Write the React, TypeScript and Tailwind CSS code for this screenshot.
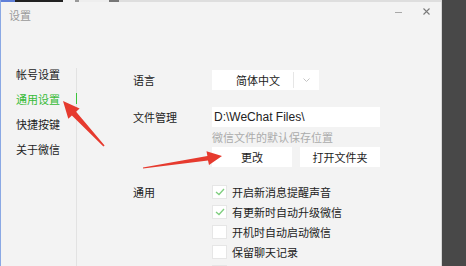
import React from "react";

const cjk = { fontFamily: '"Noto Sans CJK SC", "Noto Sans", sans-serif' };

function Check() {
  return (
    <svg width="10" height="8" viewBox="0 0 10 8" className="block">
      <path d="M1 4 L4 6.5 L9 1" fill="none" stroke="#7fce7f" strokeWidth="1.3" />
    </svg>
  );
}

function CheckRow({ label, checked }: { label: string; checked?: boolean }) {
  return (
    <div className="h-[20px] shrink-0 flex items-center">
      <div className="w-[15px] h-[14px] bg-white border border-[#e6e6e6] flex items-center justify-center">
        {checked ? <Check /> : null}
      </div>
      <span className="ml-[5px] text-[11px] leading-none text-[#222]">{label}</span>
    </div>
  );
}

export default function App() {
  return (
    <div className="relative w-[466px] h-[266px] overflow-hidden bg-[#484848] flex" style={cjk}>
      <div className="w-[442px] h-full flex flex-col bg-[#f3f3f3] border-l border-[#8aa8e4] border-r border-r-[#d6d6d6] overflow-hidden">
        {/* top strip */}
        <div className="h-[2px] shrink-0 flex bg-[#dedede]">
          <div className="w-[14px] bg-[#5f7fd8]" />
          <div className="w-[48px] bg-[#222]" />
          <div className="w-[12px] bg-[#f2f2f2]" />
          <div className="w-[4px] bg-[#999]" />
          <div className="w-[30px] bg-[#eee]" />
          <div className="w-[10px] bg-[#777]" />
        </div>
        {/* title bar */}
        <div className="h-[26px] shrink-0 flex items-center pl-[8px] pr-[11px]">
          <span className="text-[11px] text-[#9a9a9a] leading-none">设置</span>
          <div className="flex-1" />
          <div className="w-[7px] h-px bg-[#a8a8a8] mt-[-6px]" />
          <div className="w-[21px]" />
          <svg width="7" height="7" viewBox="0 0 7 7" className="mt-[-8px]">
            <path d="M0.5 0.5 L6.5 6.5 M6.5 0.5 L0.5 6.5" stroke="#7a7a7a" strokeWidth="1.1" />
          </svg>
        </div>
        {/* body */}
        <div className="flex-1 min-h-0 flex">
          <div className="w-[75px] shrink-0 pt-[34px] pl-[15px] flex flex-col">
            <div className="h-[25px] shrink-0 flex items-center text-[11px] text-[#222]">帐号设置</div>
            <div className="h-[25px] shrink-0 flex items-center text-[11px] text-[#36bb36]">通用设置</div>
            <div className="h-[25px] shrink-0 flex items-center text-[11px] text-[#222]">快捷按键</div>
            <div className="h-[25px] shrink-0 flex items-center text-[11px] text-[#222]">关于微信</div>
          </div>
          <div className="w-px shrink-0 mt-[40px] flex flex-col">
            <div className="h-[25px] shrink-0 bg-[#e2e2e2]" />
            <div className="h-[11px] shrink-0 bg-[#3cc43c]" />
            <div className="flex-1 bg-[#e2e2e2]" />
          </div>
          <div className="flex-1 pl-[56px] pt-[42px] flex flex-col">
            {/* language */}
            <div className="flex items-center h-[20px] shrink-0">
              <div className="w-[79px] text-[11px] text-[#222]">语言</div>
              <div className="w-[107px] h-[20px] bg-white flex">
                <div className="w-[81px] pl-[24px] flex items-center text-[11px] text-[#222]">简体中文</div>
                <div className="w-px bg-[#e6e6e6] my-[2px]" />
                <div className="flex-1 flex items-center justify-center">
                  <svg width="7" height="4" viewBox="0 0 7 4">
                    <path d="M0.5 0.5 L3.5 3.5 L6.5 0.5" fill="none" stroke="#c4c4c4" strokeWidth="1" />
                  </svg>
                </div>
              </div>
            </div>
            {/* file management */}
            <div className="flex items-center h-[20px] shrink-0 mt-[17px]">
              <div className="w-[79px] text-[11px] text-[#222]">文件管理</div>
              <div className="w-[168px] h-[20px] bg-white flex items-center pl-[2px] text-[12px] text-[#222]" style={{ fontFamily: '"Liberation Sans", Arial, sans-serif' }}>
                D:\WeChat Files\
              </div>
            </div>
            <div className="flex h-[20px] shrink-0 items-center">
              <div className="w-[79px]" />
              <span className="text-[11px] text-[#ababab]">微信文件的默认保存位置</span>
            </div>
            <div className="flex h-[20px] shrink-0">
              <div className="w-[79px]" />
              <div className="w-[80px] h-[20px] bg-white flex items-center justify-center text-[11px] text-[#222]">更改</div>
              <div className="w-[8px]" />
              <div className="w-[80px] h-[20px] bg-white flex items-center justify-center text-[11px] text-[#222]">打开文件夹</div>
            </div>
            {/* general */}
            <div className="flex shrink-0 mt-[15px]">
              <div className="w-[79px] h-[20px] flex items-center text-[11px] text-[#222]">通用</div>
              <div className="flex flex-col">
                <CheckRow label="开启新消息提醒声音" checked />
                <CheckRow label="有更新时自动升级微信" checked />
                <CheckRow label="开机时自动启动微信" />
                <CheckRow label="保留聊天记录" />
                <CheckRow label="" />
              </div>
            </div>
          </div>
        </div>
      </div>
      {/* annotation arrows */}
      <svg className="absolute left-0 top-0 pointer-events-none" width="466" height="266" viewBox="0 0 466 266">
        <polygon
          points="63,101 79.6,108.6 76.1,111.7 104.6,145.4 103.4,146.6 71.9,115.6 68.3,118.8"
          fill="#e63a2e"
        />
        <polygon
          points="222,156 206.5,151.3 207.4,156 142.9,167.4 143.1,168.6 208,160.4 209,164.9"
          fill="#e63a2e"
        />
      </svg>
    </div>
  );
}
